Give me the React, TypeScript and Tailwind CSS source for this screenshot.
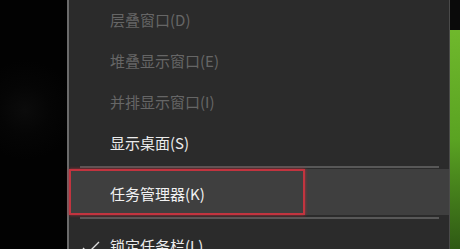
import React from "react"

const font = { fontFamily: '"Noto Sans CJK SC", "Noto Sans", sans-serif' }

const MenuItem = ({ label, disabled, h }: { label: string, disabled?: boolean, h: string }) => {
    return (
        <div className={`${h} flex items-center pl-[41px] text-[15px] ${disabled ? "text-[#666666]" : "text-[#ececec]"}`}>
            {label}
        </div>
    )
}

const Separator = ({ h }: { h: string }) => (
    <div className={`${h} flex items-center pl-[11px] pr-[10px]`}>
        <div className="h-[2px] w-full bg-[#585858]"></div>
    </div>
)

const App = () => {
    return (
        <div className="flex w-[460px] h-[249px] overflow-hidden bg-black" style={font}>
            {/* desktop on the left */}
            <div className="w-[67px] h-full bg-[radial-gradient(circle_at_25px_110px,#0b0b0b_0,#050505_25px,#020202_50px)]"></div>

            {/* context menu */}
            <div className="relative w-[383px] h-full bg-[#2b2b2b] border-l-2 border-[#6b6b6b] border-r border-r-[#4a4a4a]">
                <MenuItem label="层叠窗口(D)" disabled h="h-[41px]" />
                <MenuItem label="堆叠显示窗口(E)" disabled h="h-[41px]" />
                <MenuItem label="并排显示窗口(I)" disabled h="h-[41px]" />
                <MenuItem label="显示桌面(S)" h="h-[41px]" />
                <Separator h="h-[5px]" />
                <div className="relative h-[46px] bg-[#3f3f3f] flex items-center pl-[41px] pt-[4px] text-[15px] text-[#f2f2f2]">
                    任务管理器(K)
                    <div className="absolute left-0 top-0 w-[236px] h-[46px] border-2 border-[#c2343f] shadow-[0_0_3px_#a8303a]"></div>
                </div>
                <Separator h="h-[6px]" />
                <div className="h-[30px] flex items-end pl-[41px] text-[15px] text-[#ececec] relative">
                    <span className="translate-y-[6px]">锁定任务栏(L)</span>
                    <svg className="absolute left-[13px] top-[20px]" width="18" height="14" viewBox="0 0 18 14">
                        <path d="M1 7 L6 12 L17 1" fill="none" stroke="#dcdcdc" strokeWidth="1.4" />
                    </svg>
                </div>
            </div>

            {/* wallpaper strip on the right */}
            <div className="w-[10px] h-full flex flex-col">
                <div className="h-[30px] bg-[#0a0a0a]"></div>
                <div className="flex-1 bg-gradient-to-b from-[#6fb82c] via-[#5aa322] to-[#2f5a14]"></div>
            </div>
        </div>
    )
}

export default App
